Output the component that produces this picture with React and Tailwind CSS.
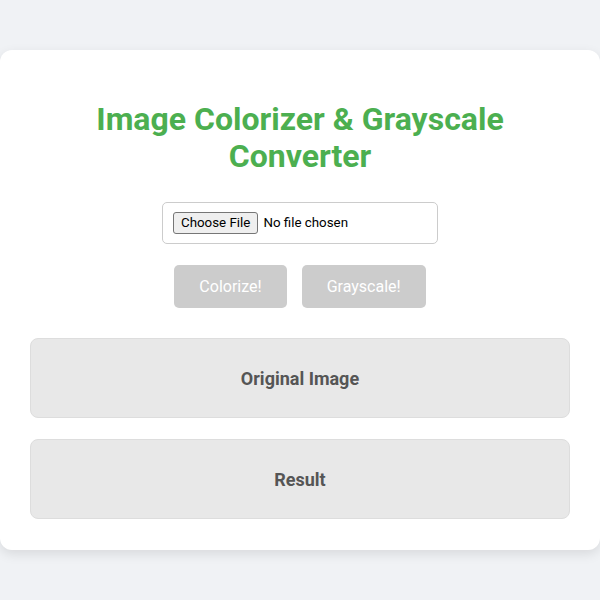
export default function App() {
  return (
    <div className="min-h-[600px] bg-[#f0f2f5] py-[50px]" style={{ fontFamily: "Roboto, 'Liberation Sans', sans-serif" }}>
      <div className="bg-white rounded-[12px] shadow-[0_4px_12px_rgba(0,0,0,0.1)] px-[30px] pt-[30px] pb-[31px] flex flex-col items-center">
        <h1 className="mt-[21px] mb-[27px] text-[32px] leading-[37px] font-bold text-[#4caf50] text-center w-[420px]">
          Image Colorizer &amp; Grayscale Converter
        </h1>
        <input
          type="file"
          className="w-[276px] h-[42px] px-[10px] py-[9px] border border-[#ccc] rounded-[5px] text-[13.33px] leading-[22px] text-black file:bg-[#efefef] file:border file:border-solid file:border-[#767676] file:rounded-[3px] file:px-[7px] file:py-[1px] file:leading-[18px] file:mr-[5px] file:text-[13.33px] file:text-black"
        />
        <div className="flex gap-[15px] mt-[21px]">
          <button className="bg-[#ccc] text-white text-[16px] leading-[19px] px-[25px] py-[12px] rounded-[5px]">Colorize!</button>
          <button className="bg-[#ccc] text-white text-[16px] leading-[19px] px-[25px] py-[12px] rounded-[5px]">Grayscale!</button>
        </div>
        <div className="w-full mt-[30px] h-[80px] bg-[#e8e8e8] border border-[#ddd] rounded-[8px] flex items-center justify-center">
          <span className="text-[18px] font-bold text-[#555]">Original Image</span>
        </div>
        <div className="w-full mt-[21px] h-[80px] bg-[#e8e8e8] border border-[#ddd] rounded-[8px] flex items-center justify-center">
          <span className="text-[18px] font-bold text-[#555]">Result</span>
        </div>
      </div>
    </div>
  );
}
